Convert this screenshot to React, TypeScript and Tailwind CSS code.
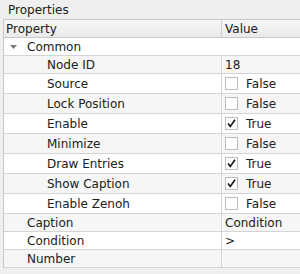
import { ReactNode } from "react";

type Row = {
  label: string;
  indent: number;
  value?: string;
  check?: boolean;
  tall?: boolean;
};

const rows: Row[] = [
  { label: "Node ID", indent: 43, value: "18" },
  { label: "Source", indent: 43, check: false, tall: true },
  { label: "Lock Position", indent: 43, check: false, tall: true },
  { label: "Enable", indent: 43, check: true, tall: true },
  { label: "Minimize", indent: 43, check: false, tall: true },
  { label: "Draw Entries", indent: 43, check: true, tall: true },
  { label: "Show Caption", indent: 43, check: true, tall: true },
  { label: "Enable Zenoh", indent: 43, check: false, tall: true },
  { label: "Caption", indent: 23, value: "Condition" },
  { label: "Condition", indent: 23, value: ">" },
  { label: "Number", indent: 23, value: "" },
];

const CheckBox = ({ checked }: { checked: boolean }) => (
  <span className="w-[13px] h-[13px] border border-[#bcbcbc] bg-white flex items-center justify-center shrink-0">
    {checked && (
      <svg width="9" height="9" viewBox="0 0 9 9">
        <path d="M1 4.5 L3.3 7.5 L8 0.8" fill="none" stroke="#111" strokeWidth="1.6" />
      </svg>
    )}
  </span>
);

const Cell = ({ children, className }: { children: ReactNode; className?: string }) => (
  <div className={`flex items-center ${className ?? ""}`}>{children}</div>
);

export default function App() {
  return (
    <div
      className="w-[300px] h-[274px] bg-[#efefef] text-[12px] text-[#202020] overflow-hidden"
      style={{ fontFamily: '"DejaVu Sans", sans-serif' }}
    >
      <div className="h-[19px] pl-[8px] flex items-center">Properties</div>
      <div className="ml-[3px] border-l border-t border-[#c8c8c8]">
        <div className="flex h-[18px] border-b border-[#c8c8c8] bg-gradient-to-b from-[#f6f6f6] to-[#eaeaea]">
          <Cell className="w-[218px] border-r border-[#d0d0d0] pl-[2px]">Property</Cell>
          <Cell className="flex-1 pl-[3px]">Value</Cell>
        </div>
        <div className="flex items-center h-[18px] border-b border-[#d4d4d4] bg-white">
          <svg width="7" height="4" viewBox="0 0 7 4" className="ml-[6px] mr-[10px]">
            <path d="M0 0 H7 L3.5 4 Z" fill="#7a7a7a" />
          </svg>
          <span>Common</span>
        </div>
        {rows.map((row, i) => (
          <div
            key={row.label}
            className={`flex border-b border-[#d4d4d4] ${row.tall ? "h-[20px]" : "h-[18px]"} ${
              i % 2 === 0 ? "bg-[#f6f6f6]" : "bg-white"
            }`}
          >
            <Cell className="w-[218px] border-r border-[#d4d4d4]">
              <span style={{ paddingLeft: row.indent }}>{row.label}</span>
            </Cell>
            <Cell className="flex-1 pl-[3px]">
              {row.check !== undefined ? (
                <>
                  <CheckBox checked={row.check} />
                  <span className="ml-[8px]">{row.check ? "True" : "False"}</span>
                </>
              ) : (
                <span>{row.value}</span>
              )}
            </Cell>
          </div>
        ))}
      </div>
    </div>
  );
}
